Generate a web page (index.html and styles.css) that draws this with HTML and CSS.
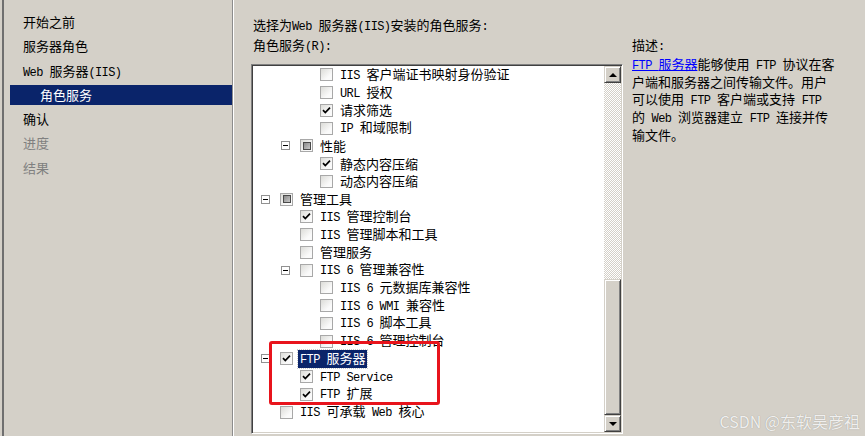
FILE: index.html
```html
<!DOCTYPE html>
<html lang="zh-CN">
<head>
    <meta charset="UTF-8">
    <title>添加角色向导 - 角色服务</title>
    <link rel="stylesheet" href="styles.css">
</head>
<body>
    <div class="window">
        <nav class="steps">
            <div class="step">开始之前</div>
            <div class="step">服务器角色</div>
            <div class="step"><span class="en">Web </span>服务器<span class="en">(IIS)</span></div>
            <div class="step sub current">角色服务</div>
            <div class="step">确认</div>
            <div class="step off">进度</div>
            <div class="step off">结果</div>
        </nav>

        <main class="main">
            <div class="lead">选择为<span class="en">Web </span>服务器<span class="en">(IIS)</span>安装的角色服务<span class="en">:</span></div>
            <div class="cols">
                <div class="roles">
                    <div class="label">角色服务<span class="en">(R):</span></div>
                    <div class="tree-box">
                        <ul class="tree">
                            <li class="row lv2"><i class="tog none"></i><i class="chk"></i><span class="txt"><span class="en">IIS </span>客户端证书映射身份验证</span></li>
                            <li class="row lv2"><i class="tog none"></i><i class="chk"></i><span class="txt"><span class="en">URL </span>授权</span></li>
                            <li class="row lv2"><i class="tog none"></i><i class="chk on"><svg viewBox="0 0 11 11"><path d="M2 5.2 L4.3 7.6 L9 2.6"/></svg></i><span class="txt">请求筛选</span></li>
                            <li class="row lv2"><i class="tog none"></i><i class="chk"></i><span class="txt"><span class="en">IP </span>和域限制</span></li>
                            <li class="row lv1"><i class="tog"></i><i class="chk part"></i><span class="txt">性能</span></li>
                            <li class="row lv2"><i class="tog none"></i><i class="chk on"><svg viewBox="0 0 11 11"><path d="M2 5.2 L4.3 7.6 L9 2.6"/></svg></i><span class="txt">静态内容压缩</span></li>
                            <li class="row lv2"><i class="tog none"></i><i class="chk"></i><span class="txt">动态内容压缩</span></li>
                            <li class="row lv0"><i class="tog"></i><i class="chk part"></i><span class="txt">管理工具</span></li>
                            <li class="row lv1"><i class="tog none"></i><i class="chk on"><svg viewBox="0 0 11 11"><path d="M2 5.2 L4.3 7.6 L9 2.6"/></svg></i><span class="txt"><span class="en">IIS </span>管理控制台</span></li>
                            <li class="row lv1"><i class="tog none"></i><i class="chk"></i><span class="txt"><span class="en">IIS </span>管理脚本和工具</span></li>
                            <li class="row lv1"><i class="tog none"></i><i class="chk"></i><span class="txt">管理服务</span></li>
                            <li class="row lv1"><i class="tog"></i><i class="chk"></i><span class="txt"><span class="en">IIS 6 </span>管理兼容性</span></li>
                            <li class="row lv2"><i class="tog none"></i><i class="chk"></i><span class="txt"><span class="en">IIS 6 </span>元数据库兼容性</span></li>
                            <li class="row lv2"><i class="tog none"></i><i class="chk"></i><span class="txt"><span class="en">IIS 6 WMI </span>兼容性</span></li>
                            <li class="row lv2"><i class="tog none"></i><i class="chk"></i><span class="txt"><span class="en">IIS 6 </span>脚本工具</span></li>
                            <li class="row lv2"><i class="tog none"></i><i class="chk"></i><span class="txt"><span class="en">IIS 6 </span>管理控制台</span></li>
                            <li class="row lv0"><i class="tog"></i><i class="chk on"><svg viewBox="0 0 11 11"><path d="M2 5.2 L4.3 7.6 L9 2.6"/></svg></i><span class="txt selected"><span class="en">FTP </span>服务器</span></li>
                            <li class="row lv1"><i class="tog none"></i><i class="chk on"><svg viewBox="0 0 11 11"><path d="M2 5.2 L4.3 7.6 L9 2.6"/></svg></i><span class="txt"><span class="en">FTP Service</span></span></li>
                            <li class="row lv1"><i class="tog none"></i><i class="chk on"><svg viewBox="0 0 11 11"><path d="M2 5.2 L4.3 7.6 L9 2.6"/></svg></i><span class="txt"><span class="en">FTP </span>扩展</span></li>
                            <li class="row lv0"><i class="tog none"></i><i class="chk"></i><span class="txt"><span class="en">IIS </span>可承载<span class="en"> Web </span>核心</span></li>
                        </ul>
                        <div class="scrollbar">
                            <div class="sb-btn"><i class="arrow up"></i></div>
                            <div class="sb-track"></div>
                            <div class="sb-thumb"></div>
                            <div class="sb-btn"><i class="arrow down"></i></div>
                        </div>
                        <div class="mark"></div>
                    </div>
                </div>

                <aside class="desc">
                    <div class="label">描述<span class="en">:</span></div>
                    <p><a href="#"><span class="en">FTP </span>服务器</a>能够使用<span class="en"> FTP </span>协议在客<br>户端和服务器之间传输文件。用户<br>可以使用<span class="en"> FTP </span>客户端或支持<span class="en"> FTP</span><br>的<span class="en"> Web </span>浏览器建立<span class="en"> FTP </span>连接并传<br>输文件。</p>
                </aside>
            </div>
        </main>

        <div class="watermark">CSDN @东软吴彦祖</div>
    </div>
</body>
</html>
```

FILE: styles.css
```css
body {
    margin: 0;
    background: #d4d0c8;
    font-family: "Noto Sans CJK SC", sans-serif;
    font-size: 13px;
    color: #000;
    width: 865px;
    height: 436px;
    overflow: hidden;
}

.en {
    font-family: "Liberation Mono", monospace;
    font-size: 12px;
    letter-spacing: -0.6px;
}

.window {
    display: flex;
    height: 436px;
    position: relative;
}

/* left wizard steps */
.steps {
    box-sizing: border-box;
    width: 231px;
    margin-left: 2px;
    border-left: 2px solid #6f6f6f;
    border-right: 1px solid #8c8c8c;
    box-shadow: 1px 0 0 #fff;
    padding: 12px 0 0 6px;
}

.step {
    height: 20px;
    line-height: 20px;
    margin-bottom: 4.3px;
    padding-left: 13px;
}

.step.sub {
    padding-left: 30px;
}

.step.current {
    background: #0a246a;
    color: #fff;
}

.step.off {
    color: #808080;
}

/* main area */
.main {
    flex: 1;
    padding: 15px 0 0 18px;
}

.lead,
.label {
    height: 20px;
    line-height: 20px;
    padding-left: 2px;
}

.cols {
    display: flex;
    gap: 9px;
}

.roles {
    width: 372px;
}

.roles .label {
    margin-bottom: 9px;
}

.tree-box {
    box-sizing: border-box;
    position: relative;
    display: flex;
    height: 370px;
    padding: 1px;
    background: #fff;
    border: 1px solid;
    border-color: #808080 #fff #fff #808080;
    box-shadow: inset 1px 1px 0 #404040, inset -1px -1px 0 #d4d0c8;
}

.tree {
    flex: 1;
    list-style: none;
    margin: 0;
    padding: 0;
    overflow: hidden;
}

.row {
    display: flex;
    align-items: center;
    height: 17.75px;
    white-space: nowrap;
}

.lv0 { padding-left: 8px; }
.lv1 { padding-left: 28px; }
.lv2 { padding-left: 48px; }

.tog {
    box-sizing: border-box;
    position: relative;
    width: 9px;
    height: 9px;
    margin-right: 10px;
    border: 1px solid #919191;
    background: #fff;
}

.tog::after {
    content: "";
    position: absolute;
    left: 1px;
    top: 3px;
    width: 5px;
    height: 1px;
    background: #000;
}

.tog.none {
    visibility: hidden;
}

.chk {
    box-sizing: border-box;
    display: flex;
    align-items: center;
    justify-content: center;
    width: 13px;
    height: 13px;
    border: 1px solid #a8a8a8;
    background: linear-gradient(135deg, #dcdcd8, #fafafa 70%);
}

.chk svg {
    width: 11px;
    height: 11px;
}

.chk svg path {
    fill: none;
    stroke: #000;
    stroke-width: 1.7;
}

.chk.part::after {
    content: "";
    width: 8px;
    height: 8px;
    box-sizing: border-box;
    border: 1px solid #4a4a4a;
    background: linear-gradient(135deg, #8a8a8a, #c8c8c8);
}

.txt {
    margin-left: 5px;
    padding: 0 2px;
    line-height: 16px;
}

.txt.selected {
    background: #0a246a;
    color: #fff;
    outline: 1px dotted #c9c9c9;
}

/* scrollbar */
.scrollbar {
    display: flex;
    flex-direction: column;
    width: 17px;
}

.sb-btn,
.sb-thumb {
    box-sizing: border-box;
    display: flex;
    align-items: center;
    justify-content: center;
    background: #d4d0c8;
    border: 1px solid;
    border-color: #d4d0c8 #404040 #404040 #d4d0c8;
    box-shadow: inset 1px 1px 0 #fff, inset -1px -1px 0 #808080;
}

.sb-btn {
    height: 17px;
}

.sb-track {
    height: 196px;
    background: repeating-conic-gradient(#fff 0 25%, #d4d0c8 0 50%) 0 0 / 2px 2px;
}

.sb-thumb {
    height: 136px;
}

.arrow {
    width: 0;
    height: 0;
    border-left: 4px solid transparent;
    border-right: 4px solid transparent;
}

.arrow.up {
    border-bottom: 4px solid #000;
}

.arrow.down {
    border-top: 4px solid #000;
}

/* red annotation box */
.mark {
    position: absolute;
    left: 17px;
    top: 276px;
    width: 171px;
    height: 64px;
    box-sizing: border-box;
    border: 3px solid #e8141c;
    border-radius: 3px;
}

/* description */
.desc {
    width: 226px;
}

.desc .label {
    padding-left: 0;
    margin-bottom: 1px;
}

.desc p {
    margin: 0;
    line-height: 16.3px;
}

.desc a {
    color: #0000ff;
    text-decoration: underline;
}

.watermark {
    position: absolute;
    right: 5px;
    bottom: 6px;
    font-size: 16px;
    line-height: 18px;
    color: rgba(255, 255, 255, 0.85);
    text-shadow: 0 0 1px rgba(0, 0, 0, 0.3);
}
```
